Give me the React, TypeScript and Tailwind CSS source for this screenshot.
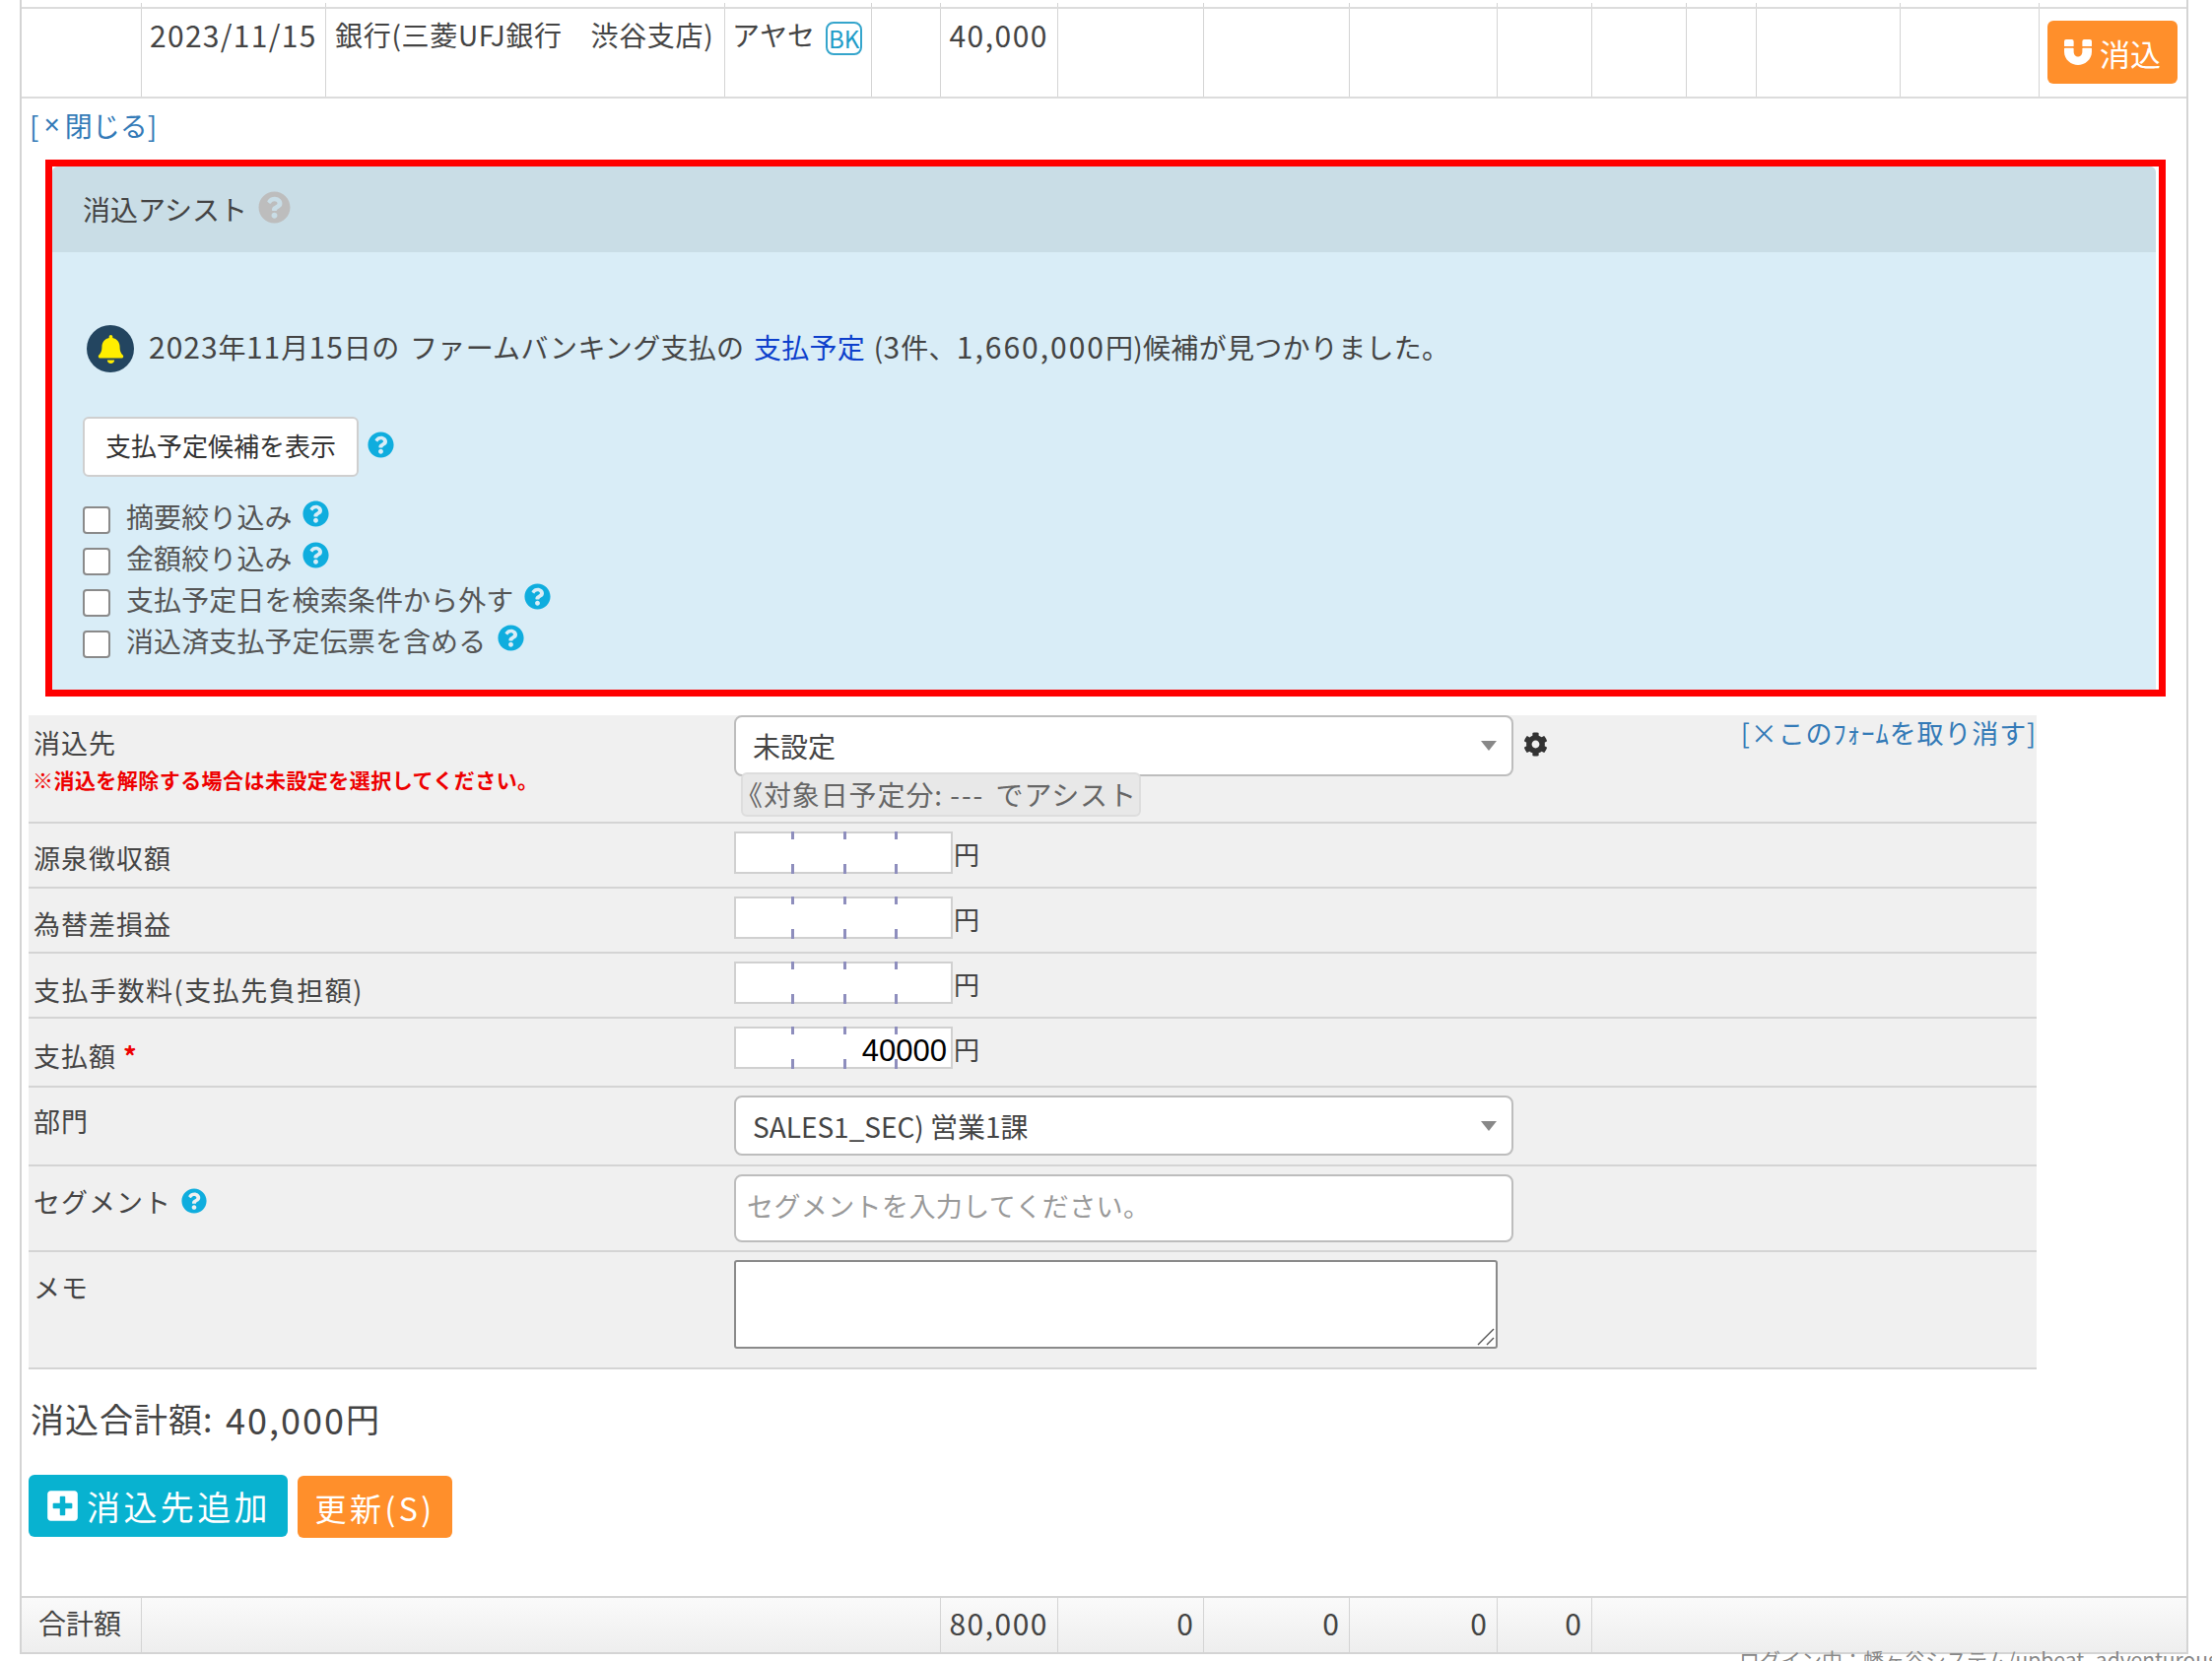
import React from "react";
import { FaQuestionCircle, FaCog, FaBell, FaPlusSquare, FaMagnet } from "react-icons/fa";

const topCols = "grid grid-cols-[121px_187px_405px_149px_70px_119px_148px_148px_150px_96px_96px_71px_146px_141px_1fr]";
const footCols = "grid grid-cols-[121px_811px_119px_148px_148px_150px_96px_1fr]";

function Help({ className }: { className: string }) {
  return <FaQuestionCircle className={className} />;
}

function Num({ children }: { children: React.ReactNode }) {
  return <span className="text-[30px] tracking-[1px]">{children}</span>;
}

function Money({ value }: { value?: string }) {
  return (
    <div className="flex items-center">
      <div className="relative w-[222px] h-[43px] bg-white border-2 border-[#d0d0d0]">
        {[56, 109, 161].map((x) => (
          <React.Fragment key={x}>
            <span className="absolute top-[-2px] w-[3px] h-[8px] bg-[#8e8ebd]" style={{ left: x }} />
            <span className="absolute bottom-[-2px] w-[3px] h-[10px] bg-[#8e8ebd]" style={{ left: x }} />
          </React.Fragment>
        ))}
        <span className="absolute right-[4px] top-[3px] leading-[40px] text-[31px] text-black font-['Liberation_Sans',sans-serif]">
          {value}
        </span>
      </div>
      <span className="ml-[1px] text-[26px] text-[#444] mt-[3px]">円</span>
    </div>
  );
}

function Row({ label, h, children }: { label: React.ReactNode; h: string; children: React.ReactNode }) {
  return (
    <div className={`grid grid-cols-[716px_1fr] border-b-2 border-[#d4d4d4] ${h}`}>
      <div className="pl-[5px]">{label}</div>
      <div className="pt-[8px]">{children}</div>
    </div>
  );
}

function Label({ children, pt, track = "tracking-[1px]" }: { children: React.ReactNode; pt: string; track?: string }) {
  return <div className={`flex items-center gap-[10px] h-[32px] text-[27px] text-[#444] ${track} ${pt}`}>{children}</div>;
}

function Arrow() {
  return <span className="w-0 h-0 border-x-[8px] border-x-transparent border-t-[10px] border-t-[#888]" />;
}

function Check({ text, gap }: { text: string; gap: string }) {
  return (
    <div className="flex items-start h-[42px]">
      <span className="mt-[2px] w-[28px] h-[28px] rounded-[4px] bg-white border-2 border-[#8a8a8a]" />
      <span className="ml-[16px] mt-[-5px] text-[28px] leading-[34px] tracking-[0.1px] text-[#555]">{text}</span>
      <Help className={`${gap} mt-[-4px] w-[27px] h-[27px] text-[#0fadde]`} />
    </div>
  );
}

export default function App() {
  return (
    <div className="relative w-[2245px] h-[1686px] overflow-hidden bg-white text-[#333] leading-none font-['Noto_Sans_CJK_JP',sans-serif]">
      <div className="ml-[20px] w-[2201px] h-[1679px] border-x-2 border-[#d4d4d4] pt-[3px] flex flex-col">
        <div className={`${topCols} h-[6px] border-b-2 border-[#dcdcdc]`}>
          {Array.from({ length: 15 }).map((_, i) => (
            <div key={i} className={i ? "border-l border-[#d4d4d4]" : ""} />
          ))}
        </div>
        <div className={`${topCols} h-[91px] border-b-2 border-[#dcdcdc] text-[28px] text-[#444]`}>
          <div />
          <div className="border-l border-[#d4d4d4] pl-[8px] pt-[11px] text-[30px] tracking-[1.3px]">2023/11/15</div>
          <div className="border-l border-[#d4d4d4] pl-[9px] pt-[12px] whitespace-nowrap tracking-[0.7px]">銀行(三菱UFJ銀行　渋谷支店)</div>
          <div className="border-l border-[#d4d4d4] pl-[7px] pt-[12px] flex items-start">
            <span>アヤセ</span>
            <span className="ml-[11px] mt-[1px] w-[37px] h-[34px] rounded-[8px] border-2 border-[#35a5cc] text-[#1e9cc8] text-[24px] flex items-center justify-center">BK</span>
          </div>
          <div className="border-l border-[#d4d4d4]" />
          <div className="border-l border-[#d4d4d4] pr-[9px] pt-[11px] text-right text-[30px] tracking-[1.5px]">40,000</div>
          {Array.from({ length: 7 }).map((_, i) => (
            <div key={i} className="border-l border-[#d4d4d4]" />
          ))}
          <div className="border-l border-[#d4d4d4]" />
          <div className="border-l border-[#d4d4d4] pl-[8px] pt-[12px]">
            <div className="w-[132px] h-[64px] rounded-[6px] bg-[#ff8f2b] text-white flex items-center justify-center gap-[8px] text-[31px]">
              <FaMagnet className="w-[28px] h-[28px]" />
              <span>消込</span>
            </div>
          </div>
        </div>

        <div className="h-[62px] pl-[8px] pb-[8px] flex items-center text-[28px] text-[#337ab7]">
          [<span className="font-['Liberation_Sans',sans-serif] px-[5px]">×</span>閉じる]
        </div>

        <div className="ml-[24px] w-[2152px] h-[545px] border-[7px] border-[#ff0000] bg-white pr-[3px]">
          <div className="h-full rounded-t-[6px] bg-[#d9edf7] overflow-hidden">
            <div className="h-[87px] pl-[31px] pb-[2px] bg-[#c9dde6] flex items-center text-[28px] text-[#444]">
              <span>消込アシスト</span>
              <Help className="ml-[11px] mt-[-3px] w-[33px] h-[33px] text-[#bdbdbd]" />
            </div>
            <div className="pl-[31px] pt-[74px]">
              <div className="flex items-center h-[48px]">
                <span className="ml-[4px] w-[48px] h-[48px] rounded-full bg-[#234560] flex items-center justify-center">
                  <FaBell className="w-[29px] h-[29px] text-[#ffee00]" />
                </span>
                <span className="ml-[15px] mt-[-6px] text-[28px] text-[#444] whitespace-nowrap tracking-[0.3px]">
                  <Num>2023</Num>年<Num>11</Num>月<Num>15</Num>日の <span className="ml-[4px]">ファームバンキング支払の</span> <span className="ml-[3px] text-[#0d3fcc]">支払予定</span> <span className="ml-[2px]">(</span><Num>3</Num>件、<span className="text-[30px] tracking-[2px]">1,660,000</span>円)候補が見つかりました。
                </span>
              </div>
              <div className="mt-[45px] flex items-start">
                <div className="w-[280px] h-[61px] pb-[4px] rounded-[6px] bg-white border-2 border-[#cfcfcf] flex items-center justify-center text-[26px] text-[#333]">
                  支払予定候補を表示
                </div>
                <Help className="ml-[9px] mt-[15px] w-[27px] h-[27px] text-[#0fadde]" />
              </div>
              <div className="mt-[28px]">
                <Check text="摘要絞り込み" gap="ml-[10px]" />
                <Check text="金額絞り込み" gap="ml-[10px]" />
                <Check text="支払予定日を検索条件から外す" gap="ml-[11px]" />
                <Check text="消込済支払予定伝票を含める" gap="ml-[12px]" />
              </div>
            </div>
          </div>
        </div>

        <div className="ml-[7px] mt-[19px] w-[2038px] bg-[#f0f0f0]">
          <div className="grid grid-cols-[716px_1fr] border-b-2 border-[#d4d4d4] h-[110px]">
            <div className="pl-[5px]">
              <Label pt="mt-[11px]">消込先</Label>
              <div className="mt-[12px] ml-[-1px] text-[21px] font-bold text-[#ee0000] tracking-[0.45px] whitespace-nowrap">※消込を解除する場合は未設定を選択してください。</div>
            </div>
            <div className="flex items-start">
              <div className="w-[791px]">
                <div className="h-[62px] rounded-[8px] bg-white border-2 border-[#bdbdbd] pl-[17px] pr-[15px] flex items-center justify-between text-[28px] text-[#444]">
                  <span>未設定</span>
                  <Arrow />
                </div>
                <div className="ml-[7px] mt-[-4px] relative w-[406px] h-[45px] pb-[2px] rounded-[6px] bg-[#e8e8e8] border-2 border-[#dddddd] text-[#666] text-[28px] flex items-center overflow-hidden whitespace-nowrap tracking-[0.9px]">
                  <span className="ml-[-8px]">《対象日予定分: <span className="tracking-[2px]">---</span> <span className="ml-[4px]">でアシスト</span></span>
                </div>
              </div>
              <FaCog className="ml-[10px] mt-[17px] w-[25px] h-[25px] text-[#333]" />
              <div className="ml-auto mt-[4px] text-[27px] tracking-[0.85px] text-[#337ab7] whitespace-nowrap">[×このﾌｫｰﾑを取り消す]</div>
            </div>
          </div>
          <Row h="h-[66px]" label={<Label pt="mt-[18px]">源泉徴収額</Label>}><Money /></Row>
          <Row h="h-[66px]" label={<Label pt="mt-[19px]">為替差損益</Label>}><Money /></Row>
          <Row h="h-[66px]" label={<Label pt="mt-[20px]" track="tracking-[1.5px]">支払手数料(支払先負担額)</Label>}><Money /></Row>
          <Row h="h-[70px]" label={<Label pt="mt-[21px]">支払額 <span className="ml-[-3px] text-[#ee0000] font-bold">*</span></Label>}><Money value="40000" /></Row>
          <Row h="h-[80px]" label={<Label pt="mt-[17px]">部門</Label>}>
            <div className="w-[791px] h-[61px] rounded-[8px] bg-white border-2 border-[#bdbdbd] pl-[17px] pr-[15px] flex items-center justify-between text-[28px] text-[#444]">
              <span className="whitespace-nowrap">SALES1_SEC) 営業1課</span>
              <Arrow />
            </div>
          </Row>
          <Row h="h-[87px]" label={<Label pt="mt-[19px]">セグメント<Help className="w-[26px] h-[26px] text-[#0fadde]" /></Label>}>
            <div className="w-[791px] h-[69px] pb-[6px] rounded-[8px] bg-white border-2 border-[#bdbdbd] pl-[11px] flex items-center text-[27px] tracking-[0.4px] text-[#999]">セグメントを入力してください。</div>
          </Row>
          <Row h="h-[119px]" label={<Label pt="mt-[19px]">メモ</Label>}>
            <div className="relative w-[775px] h-[90px]">
              <textarea readOnly className="block w-full h-full resize-none rounded-[3px] bg-white border-2 border-[#8a8a8a]" />
              <svg className="absolute right-[3px] bottom-[3px] w-[18px] h-[18px]" viewBox="0 0 18 18" fill="none" stroke="#555" strokeWidth="1.4">
                <path d="M1 17 L17 1 M10 17 L17 10" />
              </svg>
            </div>
          </Row>
        </div>

        <div className="ml-[9px] mt-[32px] h-[36px] flex items-center text-[34px] text-[#444] tracking-[1px] whitespace-pre">
          消込合計額: <span className="ml-[4px] text-[36px] tracking-[2px]">40,000</span>円
        </div>

        <div className="ml-[7px] mt-[39px] flex items-start gap-[10px]">
          <div className="w-[263px] h-[63px] rounded-[6px] bg-[#08b2d0] text-white text-[34px] tracking-[3.4px] flex items-center justify-center gap-[7px]">
            <FaPlusSquare className="w-[35px] h-[35px]" />
            <span>消込先追加</span>
          </div>
          <div className="mt-[1px] w-[157px] h-[63px] rounded-[6px] bg-[#ff8f2b] text-white text-[32px] tracking-[3.5px] flex items-center justify-center">更新(S)</div>
        </div>

        <div className={`${footCols} mt-auto h-[59px] border-y-2 border-[#d4d4d4] bg-gradient-to-b from-[#fafafa] to-[#eeeeee] text-[30px] text-[#444]`}>
          <div className="pl-[17px] pb-[5px] text-[28px] flex items-center">合計額</div>
          <div className="border-l border-[#d4d4d4]" />
          <div className="border-l border-[#d4d4d4] pr-[9px] pb-[5px] flex items-center justify-end tracking-[1.5px]">80,000</div>
          <div className="border-l border-[#d4d4d4] pr-[10px] pb-[5px] flex items-center justify-end">0</div>
          <div className="border-l border-[#d4d4d4] pr-[10px] pb-[5px] flex items-center justify-end">0</div>
          <div className="border-l border-[#d4d4d4] pr-[10px] pb-[5px] flex items-center justify-end">0</div>
          <div className="border-l border-[#d4d4d4] pr-[10px] pb-[5px] flex items-center justify-end">0</div>
          <div className="border-l border-[#d4d4d4]" />
        </div>
      </div>
      <div className="absolute left-[1765px] top-[1674px] text-[21px] text-[#888] whitespace-nowrap">ログイン中：幡ヶ谷システム/upbeat_adventurous</div>
    </div>
  );
}
